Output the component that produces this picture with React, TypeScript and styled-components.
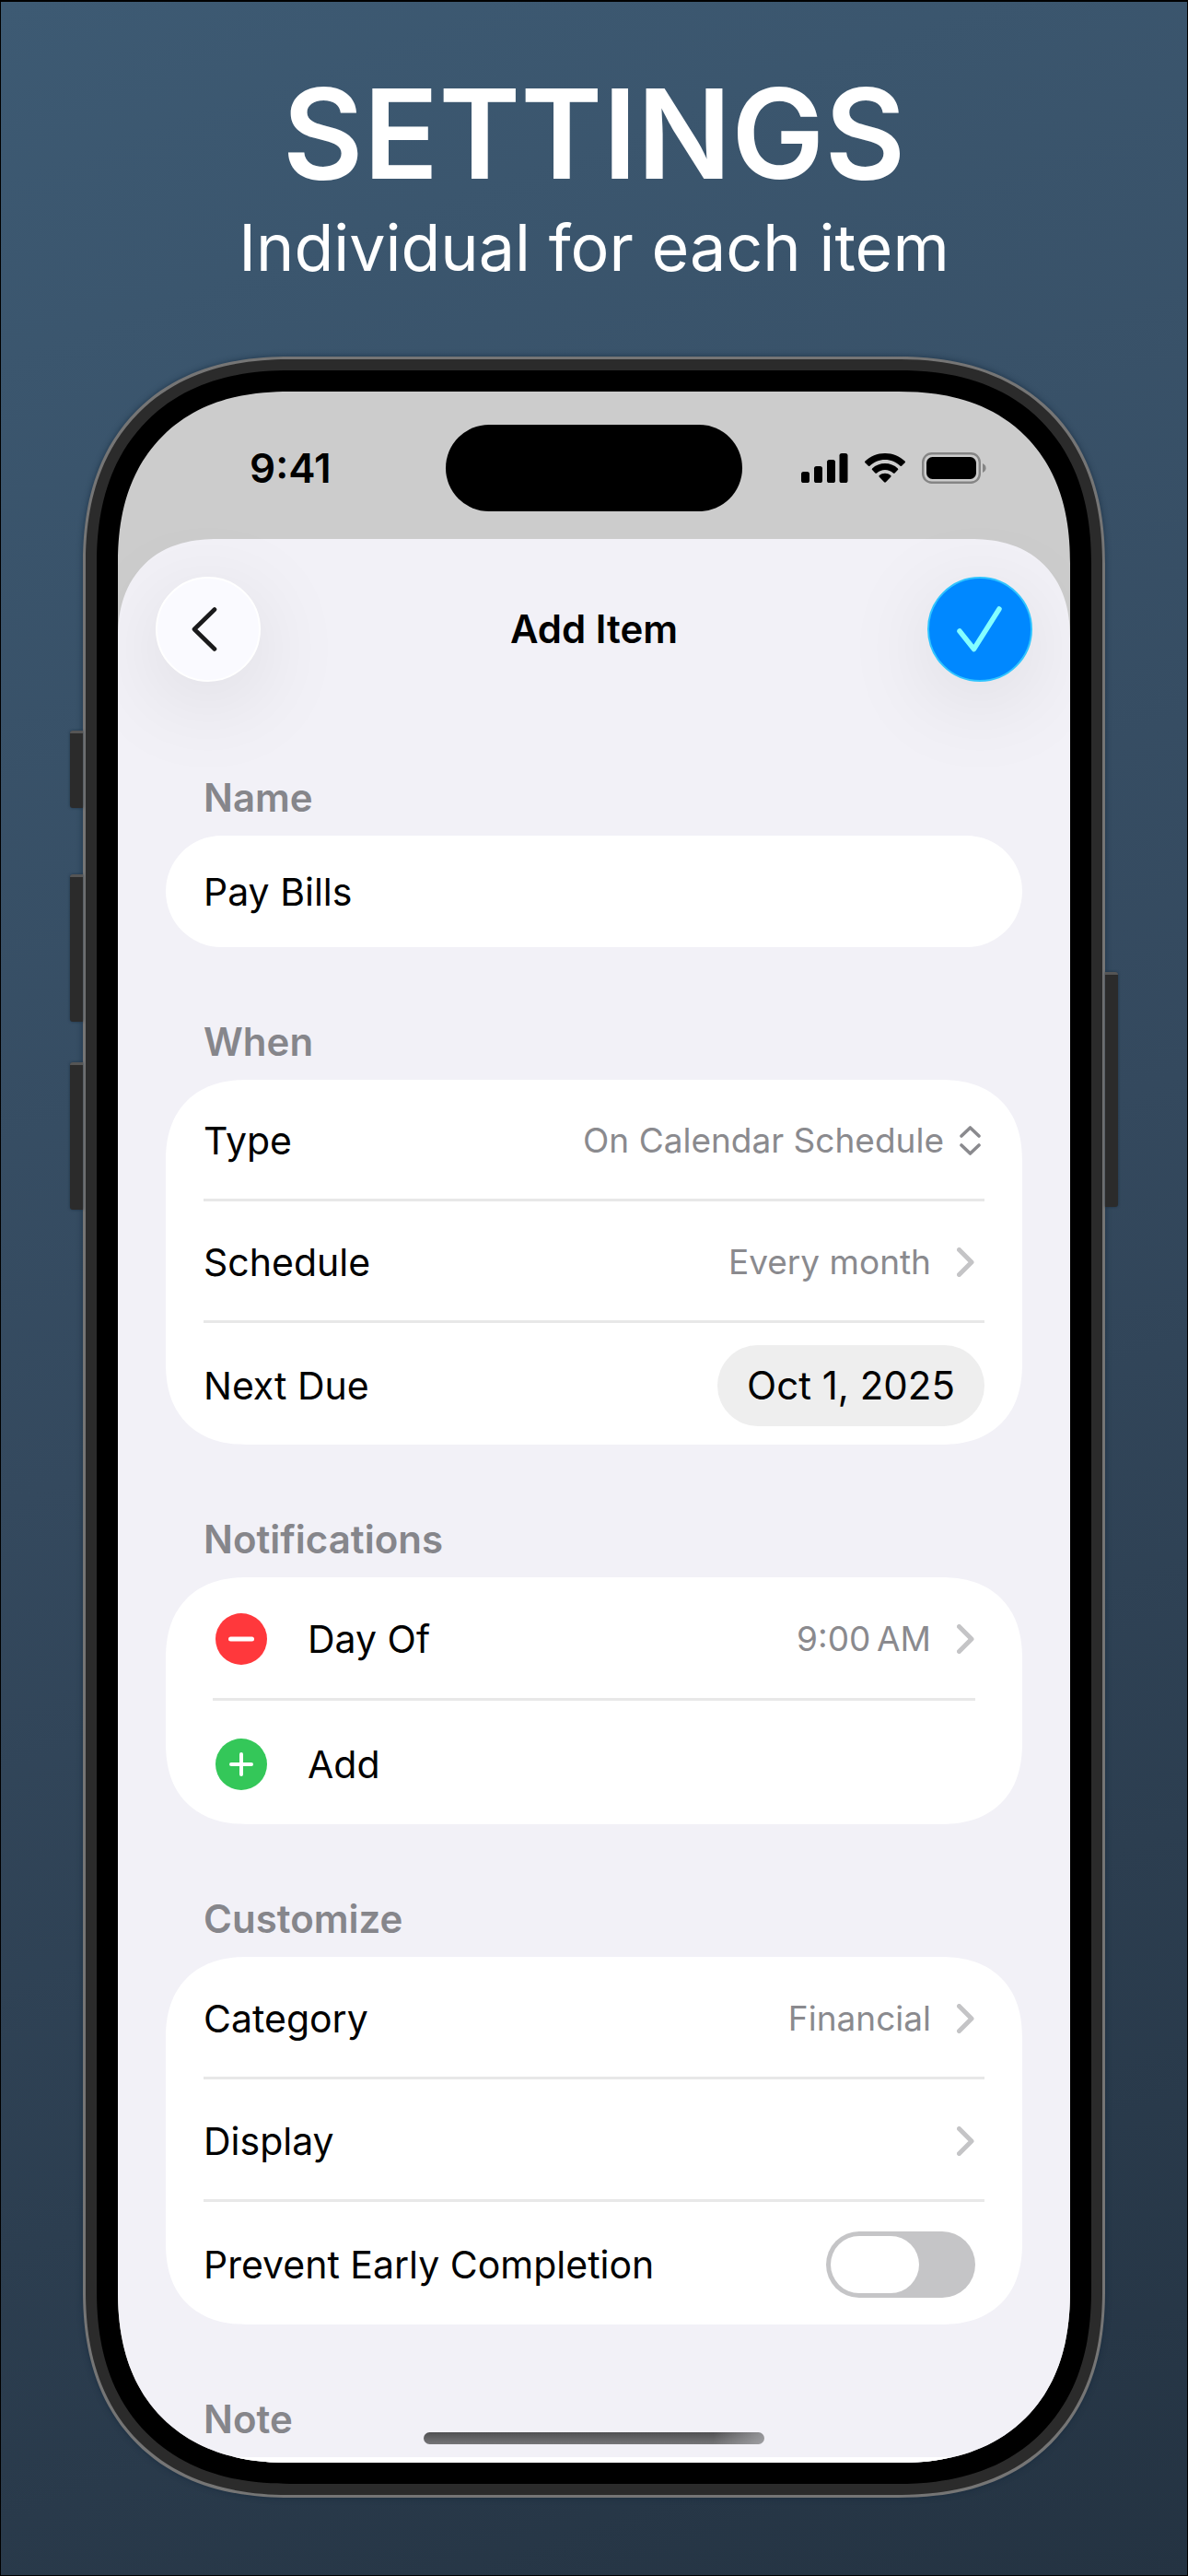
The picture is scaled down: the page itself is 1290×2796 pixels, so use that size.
import React, { useState } from "react";
import styled, { createGlobalStyle, css } from "styled-components";

const GlobalStyle = createGlobalStyle`
  *, *::before, *::after { box-sizing: border-box; }
  body {
    margin: 0;
    font-family: Inter, "Liberation Sans", Arial, sans-serif;
    color: #000;
    -webkit-font-smoothing: antialiased;
  }
  button, input, select { font: inherit; color: inherit; }
`;

/* Rounds a box the way iOS does, falling back to plain arcs. */
const smoothCorners = (arc: number, smooth: number) => css`
  border-radius: ${arc}px;
  @supports (corner-shape: superellipse(1.2)) {
    border-radius: ${smooth}px;
    corner-shape: superellipse(1.2);
  }
`;

const bareButton = css`
  appearance: none;
  border: 0;
  margin: 0;
  padding: 0;
  background: none;
  cursor: pointer;
`;

const Page = styled.div`
  min-height: 100vh;
  display: flex;
  flex-direction: column;
  padding: 62px 89px 80px;
  border: 1px solid #000;
  border-top-width: 2px;
  background: linear-gradient(160deg, #3d5a73 0%, #34495e 50%, #243342 100%);
`;

const Promo = styled.header`
  text-align: center;
  color: #fff;
  margin-bottom: 75px;
`;

const PromoTitle = styled.h1`
  margin: 0;
  font-size: 135px;
  line-height: 162px;
  font-weight: 600;
`;

const PromoText = styled.p`
  margin: 0;
  font-size: 70px;
  line-height: 86px;
`;

const Frame = styled.div`
  position: relative;
  padding: 12px;
  border: 3px solid #757575;
  background: #2b2b2b;
  box-shadow: 0 0 6px rgba(20, 40, 60, 0.7);
  ${smoothCorners(194, 225)}
`;

const SideKey = styled.span<{ $side: "left" | "right"; $top: string; $height: string }>`
  position: absolute;
  ${(p) => p.$side}: -17px;
  top: ${(p) => p.$top};
  height: ${(p) => p.$height};
  width: 14px;
  background: #2b2b2b;
  border-top: 3px solid #555;
  border-radius: ${(p) => (p.$side === "left" ? "3px 0 0 3px" : "0 3px 3px 0")};
  box-shadow: 0 0 3px rgba(20, 40, 60, 0.7);
`;

const Bezel = styled.div`
  padding: 23px;
  background: #000;
  ${smoothCorners(179, 210)}
`;

const Screen = styled.main`
  position: relative;
  display: flex;
  flex-direction: column;
  aspect-ratio: 1034 / 2248;
  overflow: hidden;
  background: #ccc;
  ${smoothCorners(156, 186)}
`;

const StatusBar = styled.div`
  display: grid;
  grid-template-columns: 1fr 322px 1fr;
  align-items: center;
  flex: none;
  height: 160px;
  padding-top: 6px;
`;

const Clock = styled.time`
  padding-left: 143px;
  font-size: 44px;
  line-height: 52px;
  font-weight: 600;
`;

const Island = styled.div`
  height: 94px;
  border-radius: 47px;
  background: #000;
`;

const StatusIcons = styled.div`
  display: flex;
  justify-content: flex-end;
  align-items: center;
  gap: 18px;
  padding-right: 91px;
`;

const Sheet = styled.div`
  flex: 1;
  min-height: 0;
  background: #f2f1f7;
  ${smoothCorners(95, 108)}
  border-bottom-left-radius: 0;
  border-bottom-right-radius: 0;
`;

const NavBar = styled.div`
  display: flex;
  justify-content: space-between;
  align-items: center;
  padding: 41px 41px 0;
`;

const NavTitle = styled.h2`
  margin: 0;
  font-size: 42px;
  line-height: 52px;
  font-weight: 600;
`;

const RoundButton = styled.button<{ $primary?: boolean }>`
  ${bareButton}
  display: grid;
  place-items: center;
  width: 114px;
  height: 114px;
  border-radius: 50%;
  border: 2px solid ${(p) => (p.$primary ? "#2fc4ff" : "#fff")};
  background: ${(p) => (p.$primary ? "#0088ff" : "#fafaff")};
  box-shadow: 0 20px 100px rgba(0, 0, 0, 0.1);
`;

const Form = styled.form`
  padding: 100px 52px 0;
  display: flex;
  flex-direction: column;
  gap: 77px;
`;

const Section = styled.section`
  display: flex;
  flex-direction: column;
  gap: 15px;
`;

const sectionHeading = css`
  margin: 0;
  padding: 0 41px;
  font-size: 42px;
  line-height: 52px;
  font-weight: 600;
  color: #86868b;
`;

const SectionTitle = styled.h3`
  ${sectionHeading}
`;

const SectionLabel = styled.label`
  ${sectionHeading}
`;

const Card = styled.div<{ $rowHeight: number; $inset?: number }>`
  display: grid;
  grid-auto-rows: minmax(${(p) => p.$rowHeight}px, auto);
  padding: 0 ${(p) => p.$inset ?? 41}px;
  background: #fff;
  ${smoothCorners(76, 88)}
`;

const NameInput = styled.input`
  width: 100%;
  height: 121px;
  padding: 0 41px;
  border: 0;
  outline: 0;
  background: #fff;
  font-size: 41px;
  border-radius: 61px;
`;

const rowLayout = css`
  display: flex;
  align-items: center;
  width: 100%;
  padding-top: 3px;
  font-size: 41px;
  line-height: 52px;
  text-align: left;
  &:not(:last-child) {
    border-bottom: 3px solid #e8e8e8;
  }
`;

const Row = styled.div`
  ${rowLayout}
`;

const RowButton = styled.button<{ $trail?: number }>`
  ${bareButton}
  ${rowLayout}
  padding-right: ${(p) => p.$trail ?? 11}px;
`;

const RowLabel = styled.label`
  flex: 1;
`;

const RowText = styled.span`
  flex: 1;
`;

const Value = styled.span`
  font-size: 37px;
  color: #8a8a8e;
  margin-right: 28px;
`;

const TypePicker = styled.span`
  display: flex;
  align-items: center;
  gap: 17px;
  padding-right: 4px;
  color: #8a8a8e;
`;

const TypeSelect = styled.select`
  appearance: none;
  field-sizing: content;
  border: 0;
  padding: 0;
  outline: 0;
  background: none;
  font-size: 37px;
  color: #8a8a8e;
`;

const DatePill = styled.button`
  ${bareButton}
  height: 88px;
  padding: 0 32px;
  border-radius: 44px;
  background: #eee;
  font-size: 42px;
`;

const Badge = styled.span<{ $color: string }>`
  display: grid;
  place-items: center;
  width: 56px;
  height: 56px;
  margin: 0 44px 0 3px;
  border-radius: 50%;
  background: ${(p) => p.$color};
`;

const Switch = styled.input`
  appearance: none;
  display: flex;
  align-items: center;
  width: 162px;
  height: 72px;
  margin: 0 10px 0 0;
  padding: 5px;
  border-radius: 36px;
  background: #c5c5c7;
  cursor: pointer;
  &::before {
    content: "";
    width: 96px;
    height: 62px;
    border-radius: 31px;
    background: #fff;
  }
  &:checked {
    justify-content: flex-end;
    background: #34c759;
  }
`;

const NoteInput = styled.textarea`
  height: 240px;
  padding: 34px 41px;
  border: 0;
  outline: 0;
  resize: none;
  background: #fff;
  font: inherit;
  font-size: 41px;
  ${smoothCorners(76, 88)}
`;

const HomeIndicator = styled.div`
  position: absolute;
  left: 50%;
  bottom: 20px;
  width: 370px;
  height: 13px;
  margin-left: -185px;
  border-radius: 7px;
  background: linear-gradient(90deg, #77777a00 85%, #b4b4b8aa 100%),
    linear-gradient(#505052, #767678);
`;

const Chevron = () => (
  <svg width="19" height="32" viewBox="0 0 19 32" fill="none" aria-hidden="true">
    <path d="M2.5 2.5 16 16 2.5 29.5" stroke="#c4c4c6" strokeWidth="5" strokeLinecap="round" strokeLinejoin="round" />
  </svg>
);

const UpDown = () => (
  <svg width="23" height="32" viewBox="0 0 23 32" fill="none" aria-hidden="true">
    <path
      d="M2 11 11.5 2 21 11M2 21 11.5 30 21 21"
      stroke="#8a8a8e"
      strokeWidth="3.6"
      strokeLinecap="round"
      strokeLinejoin="round"
    />
  </svg>
);

const Signal = () => (
  <svg width="51" height="32" viewBox="0 0 51 32" aria-hidden="true">
    <rect x="0" y="20" width="9" height="12" rx="2.6" />
    <rect x="14" y="14" width="9" height="18" rx="2.6" />
    <rect x="28" y="7" width="9" height="25" rx="2.6" />
    <rect x="41.5" y="0" width="9" height="32" rx="2.6" />
  </svg>
);

const Wifi = () => (
  <svg width="44" height="32" viewBox="0 0 44 32" aria-hidden="true">
    <path d="M22 0C13.600 0 6 3.200.400 8.600c-.5.5-.5 1.200 0 1.700l3.300 3.300c.5.5 1.200.500 1.700.100C9.800 9.600 15.600 7 22 7s12.200 2.600 16.600 6.700c.5.4 1.200.4 1.700-.1l3.300-3.300c.5-.5.5-1.200 0-1.700C38 3.200 30.400 0 22 0Z" />
    <path d="M22 11c-5.300 0-10.200 2-13.900 5.400-.5.500-.5 1.200 0 1.700l3.300 3.300c.5.5 1.200.5 1.700.1 2.400-2.100 5.500-3.400 8.900-3.400s6.500 1.300 8.900 3.400c.5.4 1.200.4 1.700-.1l3.300-3.300c.5-.5.5-1.200 0-1.700C32.200 13 27.300 11 22 11Z" />
    <path d="M22 21.800c-2.300 0-4.500.8-6.200 2.200-.5.4-.5 1.200 0 1.700l5.300 5.600c.5.500 1.300.5 1.800 0l5.300-5.600c.5-.5.5-1.300 0-1.700-1.700-1.400-3.900-2.200-6.200-2.200Z" />
  </svg>
);

const Battery = () => (
  <svg width="70" height="34" viewBox="0 0 70 34" aria-hidden="true">
    <rect x="1.200" y="1.200" width="61.600" height="31.600" rx="9.500" fill="none" stroke="#858585" strokeWidth="2.400" />
    <rect x="5" y="5" width="54" height="24" rx="6.500" />
    <path d="M66 12v10c2.300-1 3.600-2.900 3.600-5s-1.300-4-3.600-5Z" fill="#858585" />
  </svg>
);

const BackIcon = () => (
  <svg width="36" height="48" viewBox="0 0 36 48" fill="none" aria-hidden="true">
    <path d="M25 2.500 3 24 25 45.500" stroke="#1a1a1c" strokeWidth="4.600" strokeLinecap="round" strokeLinejoin="round" />
  </svg>
);

const CheckIcon = () => (
  <svg width="49" height="50" viewBox="0 0 49 50" fill="none" aria-hidden="true">
    <path d="M3 27 18.500 46.500 46 3" stroke="#84ffff" strokeWidth="5.500" strokeLinecap="round" strokeLinejoin="round" />
  </svg>
);

const Sign = ({ plus = false }: { plus?: boolean }) => (
  <svg width="28" height="28" viewBox="0 0 28 28" fill="none" aria-hidden="true">
    <path
      d={plus ? "M3 14h22M14 3v22" : "M2.500 14h23"}
      stroke="#fff"
      strokeWidth={plus ? 4 : 5}
      strokeLinecap="round"
    />
  </svg>
);

export default function App() {
  const [name, setName] = useState("Pay Bills");
  const [preventEarly, setPreventEarly] = useState(false);

  return (
    <>
      <GlobalStyle />
      <Page>
        <Promo>
          <PromoTitle>SETTINGS</PromoTitle>
          <PromoText>Individual for each item</PromoText>
        </Promo>

        <Frame>
          <SideKey $side="left" $top="17.4%" $height="3.6%" />
          <SideKey $side="left" $top="24.1%" $height="6.9%" />
          <SideKey $side="left" $top="32.9%" $height="6.9%" />
          <SideKey $side="right" $top="28.7%" $height="11%" />
          <Bezel>
            <Screen>
              <StatusBar>
                <Clock>9:41</Clock>
                <Island />
                <StatusIcons>
                  <Signal />
                  <Wifi />
                  <Battery />
                </StatusIcons>
              </StatusBar>

              <Sheet>
                <NavBar>
                  <RoundButton type="button" aria-label="Back">
                    <BackIcon />
                  </RoundButton>
                  <NavTitle>Add Item</NavTitle>
                  <RoundButton $primary type="submit" form="item" aria-label="Save">
                    <CheckIcon />
                  </RoundButton>
                </NavBar>

                <Form id="item" onSubmit={(e) => e.preventDefault()}>
                  <Section>
                    <SectionLabel htmlFor="name">Name</SectionLabel>
                    <NameInput id="name" value={name} onChange={(e) => setName(e.target.value)} />
                  </Section>

                  <Section>
                    <SectionTitle>When</SectionTitle>
                    <Card $rowHeight={132}>
                      <Row>
                        <RowLabel htmlFor="type">Type</RowLabel>
                        <TypePicker>
                          <TypeSelect id="type">
                            <option>On Calendar Schedule</option>
                          </TypeSelect>
                          <UpDown />
                        </TypePicker>
                      </Row>
                      <RowButton type="button">
                        <RowText>Schedule</RowText>
                        <Value>Every month</Value>
                        <Chevron />
                      </RowButton>
                      <Row>
                        <RowLabel htmlFor="due">Next Due</RowLabel>
                        <DatePill id="due" type="button">
                          Oct 1, 2025
                        </DatePill>
                      </Row>
                    </Card>
                  </Section>

                  <Section>
                    <SectionTitle>Notifications</SectionTitle>
                    <Card $rowHeight={134} $inset={51}>
                      <RowButton type="button" $trail={1}>
                        <Badge $color="#ff383c">
                          <Sign />
                        </Badge>
                        <RowText>Day Of</RowText>
                        <Value>{"9:00\u202fAM"}</Value>
                        <Chevron />
                      </RowButton>
                      <RowButton type="button" $trail={1}>
                        <Badge $color="#34c759">
                          <Sign plus />
                        </Badge>
                        <RowText>Add</RowText>
                      </RowButton>
                    </Card>
                  </Section>

                  <Section>
                    <SectionTitle>Customize</SectionTitle>
                    <Card $rowHeight={133}>
                      <RowButton type="button">
                        <RowText>Category</RowText>
                        <Value>Financial</Value>
                        <Chevron />
                      </RowButton>
                      <RowButton type="button">
                        <RowText>Display</RowText>
                        <Chevron />
                      </RowButton>
                      <Row>
                        <RowLabel htmlFor="early">Prevent Early Completion</RowLabel>
                        <Switch
                          id="early"
                          type="checkbox"
                          role="switch"
                          checked={preventEarly}
                          onChange={(e) => setPreventEarly(e.target.checked)}
                        />
                      </Row>
                    </Card>
                  </Section>

                  <Section>
                    <SectionLabel htmlFor="note">Note</SectionLabel>
                    <NoteInput id="note" />
                  </Section>
                </Form>
              </Sheet>
              <HomeIndicator />
            </Screen>
          </Bezel>
        </Frame>
      </Page>
    </>
  );
}
